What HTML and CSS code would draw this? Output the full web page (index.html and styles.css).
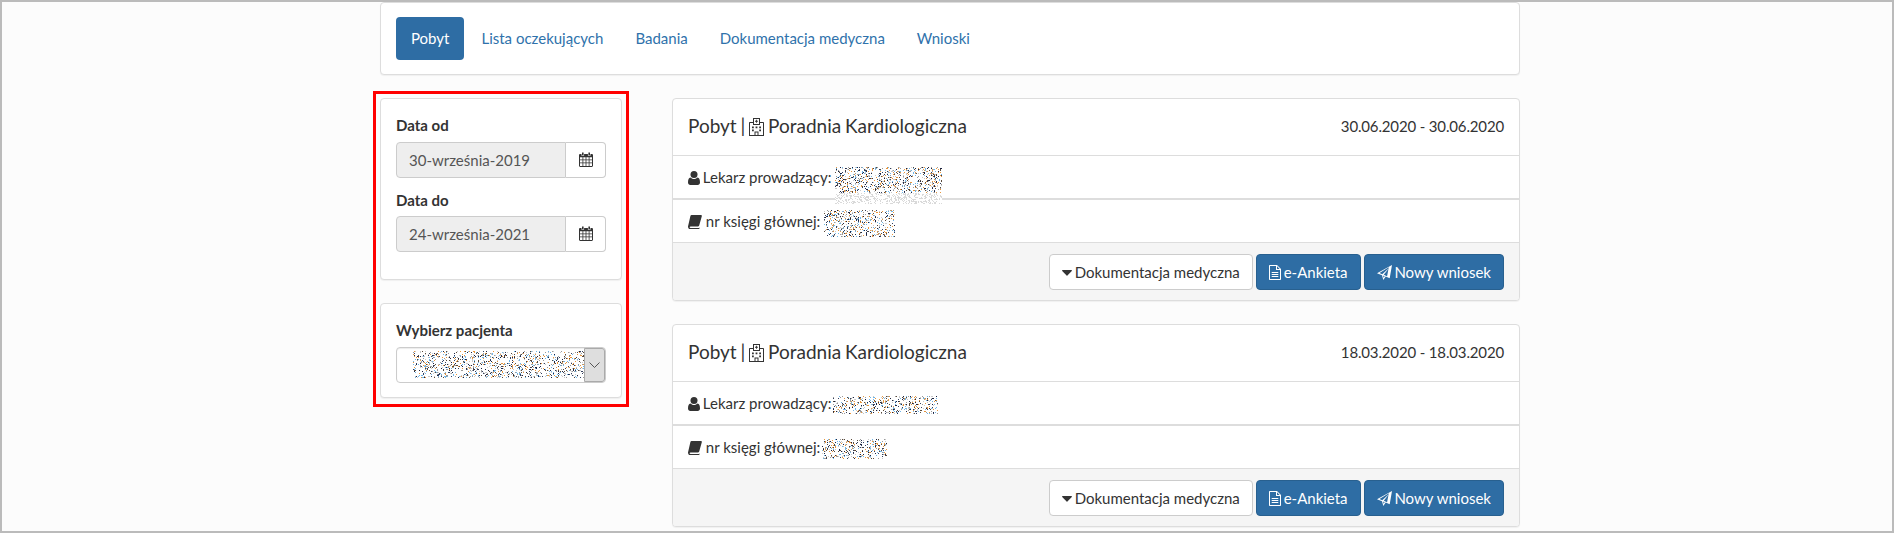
FILE: index.html
```html
<!DOCTYPE html>
<html lang="pl">
<head>
  <meta charset="UTF-8">
  <title>Pobyt</title>
  <link rel="stylesheet" href="styles.css">
</head>
<body>
  <svg class="sprite" width="0" height="0">
    <symbol id="i-calendar" viewBox="0 0 14 15">
      <path d="M3 0.5h1.600v2.800H3zM9.400 0.5H11v2.800H9.400z"/>
      <path fill-rule="evenodd" d="M1.200 2h1.300v1.800h2.600V2h3.800v1.800h2.600V2h1.300c.6 0 1.200.5 1.200 1.100v10.700c0 .6-.6 1.200-1.200 1.200H1.200C.6 15 0 14.400 0 13.800V3.100C0 2.500.6 2 1.200 2zM1 5.200v2.200h2.500V5.200zm3.300 0v2.200h2.300V5.200zm3.100 0v2.200h2.300V5.200zm3.100 0v2.200H13V5.200zM1 8.200v2.300h2.500V8.200zm3.300 0v2.300h2.300V8.200zm3.100 0v2.300h2.300V8.200zm3.100 0v2.300H13V8.200zM1 11.300V14h2.500v-2.700zm3.300 0V14h2.300v-2.700zm3.100 0V14h2.300v-2.700zm3.100 0V14H13v-2.700z"/>
    </symbol>
    <symbol id="i-hospital" viewBox="0 0 15 18">
      <path fill-rule="evenodd" d="M4 0h7v4h3c.6 0 1 .4 1 1v13H0V5c0-.6.4-1 1-1h3zm1 1v5h5V1zM1 5v12h4.500v-3.500h4V17H14V5h-3v2H4V5zm5.500 9.500V17h2v-2.500zM7 1.800h.9v1h1v.9h-1v1H7v-1H6v-.9h1z"/>
      <path d="M3 8.500h1.800v1.800H3zM6.600 8.500h1.800v1.800H6.600zM10.200 8.500H12v1.800h-1.800zM3 11.500h1.800v1.800H3zM10.200 11.500H12v1.800h-1.800z"/>
    </symbol>
    <symbol id="i-user" viewBox="0 0 12 14">
      <circle cx="6" cy="3.600" r="3.500"/>
      <path d="M2.400 6.500C3.300 7.400 4.600 8 6 8s2.700-.6 3.600-1.500C11.200 6.800 12 8.400 12 11.500c0 1.500-1 2.500-2.300 2.500H2.300C1 14 0 13 0 11.500 0 8.400.8 6.800 2.400 6.500z"/>
    </symbol>
    <symbol id="i-book" viewBox="0 0 14 14">
      <path d="M3.500 0H13c.7 0 1 .5.8 1.200l-2.600 9.300c-.2.700-.7 1-1.400 1H2.600c-.7 0-1 .3-1 .7s.3.7 1 .7h8.200l.9-.3-.3 1c-.3.900-.9 1.400-1.900 1.400H2.200C1 14 0 13 0 11.800c0-.5.100-.9.300-1.500L2.400 1.100C2.600.4 3 0 3.500 0z"/>
    </symbol>
    <symbol id="i-caret" viewBox="0 0 10 6">
      <path d="M0.600 0h8.800c.5 0 .7.500.4.900L5.400 5.500c-.2.300-.6.300-.8 0L.2.900C-.1.500.1 0 .6 0z"/>
    </symbol>
    <symbol id="i-file" viewBox="0 0 12 15">
      <path fill-rule="evenodd" d="M1 0h7l4 4v10c0 .6-.4 1-1 1H1c-.6 0-1-.4-1-1V1c0-.6.4-1 1-1zm0 1v13h10V5H7V1zm7 .3V4h2.700z"/>
      <path d="M2.700 7h6.600v1H2.700zM2.700 9h6.600v1H2.700zM2.700 11h6.600v1H2.700z"/>
    </symbol>
    <symbol id="i-plane" viewBox="0 0 15 15">
      <path fill-rule="evenodd" d="M15 0l-2.300 13.300-4-1.700L6.300 15 5 10.200 0 8.200zM2.500 8.100l2.700 1.100 6.900-6.100-5.300 6.700 3.300 1.400 1.700-9zM6 10.400l.6 2.400 1.100-1.600z"/>
    </symbol>
  </svg>

  <div class="page">
    <div class="panel nav-panel">
      <ul class="pills">
        <li class="active"><a href="#">Pobyt</a></li>
        <li><a href="#">Lista oczekujących</a></li>
        <li><a href="#">Badania</a></li>
        <li><a href="#">Dokumentacja medyczna</a></li>
        <li><a href="#">Wnioski</a></li>
      </ul>
    </div>

    <div class="columns">
      <aside class="sidebar">
        <div class="panel filter-panel">
          <label class="field-label">Data od</label>
          <div class="input-group">
            <div class="date-input">30-września-2019</div>
            <div class="addon"><svg class="ico-cal"><use href="#i-calendar"/></svg></div>
          </div>
          <label class="field-label">Data do</label>
          <div class="input-group">
            <div class="date-input">24-września-2021</div>
            <div class="addon"><svg class="ico-cal"><use href="#i-calendar"/></svg></div>
          </div>
        </div>
        <div class="panel patient-panel">
          <label class="field-label">Wybierz pacjenta</label>
          <div class="select">
            <canvas class="noise" width="171" height="27" data-seed="5"></canvas>
            <div class="select-arrow">
              <svg width="11" height="6" viewBox="0 0 11 6"><path d="M.5.5l5 5 5-5" fill="none" stroke="#555" stroke-width="1"/></svg>
            </div>
          </div>
        </div>
        <div class="marker"></div>
      </aside>

      <main class="stays">
        <div class="panel card">
          <div class="card-head">
            <h3><span>Pobyt |</span> <svg class="ico-hosp"><use href="#i-hospital"/></svg> <span>Poradnia Kardiologiczna</span></h3>
            <div class="dates">30.06.2020 - 30.06.2020</div>
          </div>
          <div class="row"><svg class="ico-user"><use href="#i-user"/></svg> Lekarz prowadzący: <canvas class="noise over tall" width="107" height="37" data-seed="11" data-fade="11"></canvas></div>
          <div class="row thick"><svg class="ico-book"><use href="#i-book"/></svg> nr księgi głównej: <canvas class="noise over" width="71" height="27" data-seed="23"></canvas></div>
          <div class="card-foot">
            <a class="btn" href="#"><svg class="ico-caret"><use href="#i-caret"/></svg> Dokumentacja medyczna</a>
            <a class="btn primary" href="#"><svg class="ico-file"><use href="#i-file"/></svg> e-Ankieta</a>
            <a class="btn primary" href="#"><svg class="ico-plane"><use href="#i-plane"/></svg> Nowy wniosek</a>
          </div>
        </div>

        <div class="panel card">
          <div class="card-head">
            <h3><span>Pobyt |</span> <svg class="ico-hosp"><use href="#i-hospital"/></svg> <span>Poradnia Kardiologiczna</span></h3>
            <div class="dates">18.03.2020 - 18.03.2020</div>
          </div>
          <div class="row"><svg class="ico-user"><use href="#i-user"/></svg> Lekarz prowadzący:<canvas class="noise over near" width="105" height="18" data-seed="37"></canvas></div>
          <div class="row thick"><svg class="ico-book"><use href="#i-book"/></svg> nr księgi głównej:<canvas class="noise over near" width="65" height="20" data-seed="41"></canvas></div>
          <div class="card-foot">
            <a class="btn" href="#"><svg class="ico-caret"><use href="#i-caret"/></svg> Dokumentacja medyczna</a>
            <a class="btn primary" href="#"><svg class="ico-file"><use href="#i-file"/></svg> e-Ankieta</a>
            <a class="btn primary" href="#"><svg class="ico-plane"><use href="#i-plane"/></svg> Nowy wniosek</a>
          </div>
        </div>
      </main>
    </div>
  </div>

  <script src="noise.js"></script>
</body>
</html>
```

FILE: styles.css
```css
html, body { margin: 0; height: 100%; }
body { box-sizing: border-box; height: 533px; overflow: hidden; border: 2px solid #bbb; background: #fcfcfc; color: #333; font: 15px/22.86px Lato, sans-serif; }
a { text-decoration: none; }
svg { fill: currentColor; }
.sprite { position: absolute; }

.page { width: 1140px; margin-left: 378px; }
.panel { box-sizing: border-box; background: #fff; border: 1px solid #ddd; border-radius: 4px; box-shadow: 0 1px 1px rgba(0,0,0,.05); }

.nav-panel { height: 73px; padding: 14px; }
.pills { display: flex; gap: 2px; margin: 0; padding: 0 0 0 1px; list-style: none; }
.pills a { display: block; padding: 10px 15px; border-radius: 4px; color: #2f72ab; }
.pills .active a { background: #2e6da4; color: #fff; }

.columns { display: grid; grid-template-columns: 242px 848px; column-gap: 50px; margin-top: 23px; }
.sidebar { position: relative; }
.marker { position: absolute; left: -7px; top: -7px; width: 256px; height: 316px; box-sizing: border-box; border: 3px solid #f00; }

.filter-panel { height: 182px; padding: 15px; }
.patient-panel { height: 95px; margin-top: 23px; padding: 15px 15px 0; }
.field-label { display: block; margin-bottom: 5px; font-weight: 700; }
.input-group + .field-label { margin-top: 1px; margin-bottom: 4px; }
.input-group { display: flex; height: 36px; margin-bottom: 11px; }
.date-input { flex: 1; padding: 6px 12px; background: #eee; border: 1px solid #ccc; border-radius: 4px 0 0 4px; color: #555; }
.addon { width: 39px; display: flex; align-items: center; justify-content: center; border: 1px solid #ccc; border-left: 0; border-radius: 0 4px 4px 0; background: #fff; }
.ico-cal { width: 14px; height: 15px; }

.select { display: flex; align-items: flex-start; box-sizing: border-box; height: 36px; border: 1px solid #ccc; border-radius: 4px; padding-left: 16px; background: #fff; box-shadow: inset 0 1px 1px rgba(0,0,0,.08); }
.select .noise { flex: none; margin-top: 3px; }
.select-arrow { display: flex; align-items: center; justify-content: center; flex: none; box-sizing: border-box; width: 21px; height: 34px; background: #dedede; border: 1px solid #aaa; border-radius: 0 3px 3px 0; }

.card { height: 203px; margin-bottom: 23px; }
.card-head { display: flex; justify-content: space-between; align-items: flex-start; box-sizing: border-box; height: 57px; padding: 13px 15px 0; border-bottom: 1px solid #ddd; }
.card-head h3 { margin: 0; font-size: 19px; line-height: 28px; font-weight: 400; word-spacing: -1px; }
.dates { line-height: 28px; letter-spacing: -.15px; }
.ico-hosp { width: 15px; height: 18px; vertical-align: -3px; }
.row { box-sizing: border-box; height: 43px; padding: 10px 15px; border-bottom: 1px solid #ddd; white-space: nowrap; }
.row.thick { height: 44px; border-top: 1px solid #ddd; }
.ico-user { width: 12px; height: 14px; vertical-align: -2px; margin-right: -1px; }
.ico-book { width: 14px; height: 14px; vertical-align: -2px; }
.noise { display: block; }
.over { display: inline-block; position: relative; vertical-align: middle; margin: -8px 0; }
.tall { margin: -8px 0 -20px; }
.near { margin-left: 2px; }

.card-foot { display: flex; justify-content: flex-end; gap: 3px; padding: 11px 15px 10px; background: #f5f5f5; height: 57px; box-sizing: border-box; border-radius: 0 0 3px 3px; }
.btn { box-sizing: border-box; height: 36px; padding: 6px 12px; background: #fff; border: 1px solid #ccc; border-radius: 4px; color: #333; white-space: nowrap; }
.btn svg { margin-right: -1px; }
.btn.primary { background: #2e6da4; border-color: #28608f; color: #fff; }
.ico-caret { width: 10px; height: 6px; vertical-align: 2px; }
.ico-file { width: 12px; height: 15px; vertical-align: -2px; }
.ico-plane { width: 15px; height: 15px; vertical-align: -2px; }
```

FILE: noise.js
```js
// speckle for the blanked-out patient and doctor names
var dark = ['#1c2340', '#33405f', '#5a4a3a'];
var tint = ['#e8963c', '#6fb6e8', '#9a9a9a', '#c9c9c9'];

function rng(seed) {
  return function () {
    seed = (seed * 16807) % 2147483647;
    return seed / 2147483647;
  };
}

document.querySelectorAll('canvas.noise').forEach(function (c) {
  var ctx = c.getContext('2d');
  var rand = rng(+c.dataset.seed * 7919);
  var fade = +c.dataset.fade || 0;
  ctx.fillStyle = '#fff';
  ctx.fillRect(0, 0, c.width, c.height);
  for (var y = 0; y < c.height; y++) {
    for (var x = 0; x < c.width; x++) {
      var r = rand();
      if (y >= c.height - fade) {
        if (r < 0.35) { ctx.fillStyle = '#d9d9d9'; ctx.fillRect(x, y, 1, 1); }
      } else if (r < 0.09) {
        ctx.fillStyle = dark[Math.floor(rand() * dark.length)];
        ctx.fillRect(x, y, 1, 1);
      } else if (r < 0.26) {
        ctx.fillStyle = tint[Math.floor(rand() * tint.length)];
        ctx.fillRect(x, y, 1, 1);
      }
    }
  }
});
```
